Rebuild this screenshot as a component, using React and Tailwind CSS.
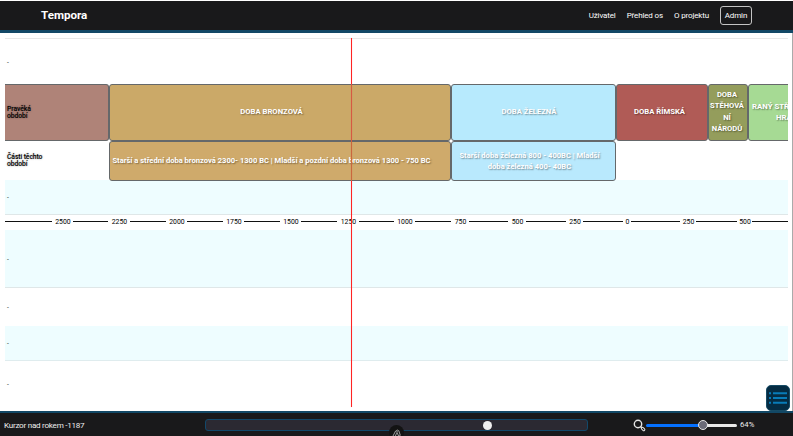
const SHADOW = '[text-shadow:1px_1px_1.5px_rgba(0,0,0,0.4)]';

const ticks = [
  ['w-[47px]', 'w-[21px]', '2500'],
  ['w-[35px]', 'w-[22px]', '2250'],
  ['w-[36px]', 'w-[21px]', '2000'],
  ['w-[36px]', 'w-[21px]', '1750'],
  ['w-[36px]', 'w-[21px]', '1500'],
  ['w-[36px]', 'w-[22px]', '1250'],
  ['w-[35px]', 'w-[21px]', '1000'],
  ['w-[36px]', 'w-[18px]', '750'],
  ['w-[39px]', 'w-[18px]', '500'],
  ['w-[40px]', 'w-[17px]', '250'],
  ['w-[40px]', 'w-[8px]', '0'],
  ['w-[49px]', 'w-[16px]', '250'],
  ['w-[41px]', 'w-[15px]', '500'],
];

function Axis() {
  return (
    <div className="flex h-[15px] items-center pb-[2px]">
      {ticks.map(([line, label, text], i) => (
        <div key={i} className="flex shrink-0 items-center">
          <span className={`h-px bg-[#111] ${line}`} />
          <span className={`flex justify-center pt-[2px] pl-px text-[6.9px] leading-[11px] text-black ${label}`}>{text}</span>
        </div>
      ))}
      <span className="h-px flex-1 bg-[#111]" />
    </div>
  );
}

function Era({ className, children }) {
  return (
    <div
      className={`flex shrink-0 items-center justify-center rounded-[3px] border border-[#65686a] text-center font-bold whitespace-nowrap text-white ${SHADOW} ${className}`}
    >
      {children}
    </div>
  );
}

function Lane({ className, children }) {
  return (
    <div className={`flex items-center pt-[3px] pl-[2px] text-[6.5px] leading-none text-[#333] ${className}`}>
      {children || '-'}
    </div>
  );
}

function Label({ children }) {
  return (
    <div className="absolute inset-y-0 left-[2px] flex w-[42px] items-center text-[6.8px] leading-[6.6px] font-medium tracking-[-0.1px] text-black [text-shadow:0_0_2px_rgba(0,0,0,0.4)]">
      {children}
    </div>
  );
}

function Search() {
  return (
    <svg className="h-[13px] w-[13px]" viewBox="0 0 13 13" fill="none" stroke="#e4e4e4">
      <circle cx="5" cy="5" r="3.7" strokeWidth="1.4" />
      <path d="M7.6 7.6 9 9" strokeWidth="1.5" />
      <rect x="8.1" y="8.9" width="4" height="2.2" rx="1.1" strokeWidth="1" transform="rotate(45 10.1 10)" />
    </svg>
  );
}

export default function App() {
  return (
    <div className="relative flex h-[436px] w-[793px] flex-col overflow-hidden bg-white font-['Roboto','Liberation_Sans',sans-serif]">
      <header className="mt-px flex h-[32px] shrink-0 items-center border-b-[3px] border-[#124866] bg-[#19191b] pr-[41px] pl-[41px] text-white">
        <h1 className="pt-px text-[11.6px] font-bold">Tempora</h1>
        <nav className="ml-auto flex items-center text-[8px] tracking-[-0.14px]">
          <a className="mr-[11px]">Uživatel</a>
          <a className="mr-[11px]">Přehled os</a>
          <a className="mr-[11px]">O projektu</a>
          <a className="flex h-[19px] w-[32px] items-center justify-center rounded-[3px] border-[1.5px] border-[#c4c4c4]">Admin</a>
        </nav>
      </header>

      <main className="relative h-[378px] shrink-0 border-r border-[#aaa] pt-[5px] pr-[4px] pl-[5px]">
        <div className="flex w-[783px] flex-col">
          <Lane className="h-[46px] border-t border-[#e8e8e8]" />
          <div className="relative flex h-[57px] overflow-hidden">
            <Era className="w-[104px] rounded-l-none border-l-0 bg-[#af8378]" />
            <Era className="w-[342px] bg-[#cba968] pr-[17px] pb-[2px] text-[7.7px]">DOBA BRONZOVÁ</Era>
            <Era className="w-[165px] bg-[#b7eafd] pr-[9px] pb-[2px] text-[7.7px]">DOBA ŽELEZNÁ</Era>
            <Era className="w-[92px] bg-[#b05b56] pr-[5px] pb-[2px] text-[7.7px]">DOBA ŘÍMSKÁ</Era>
            <Era className="w-[40px] bg-[#949d5c] pr-[2px] pb-[2px] text-[7.6px] leading-[11.3px]">
              DOBA<br />STĚHOVÁ<br />NÍ<br />NÁRODŮ
            </Era>
            <Era className="w-[76px] bg-[#a6da94] pb-px text-[7.8px] leading-[11.3px]">
              <span className="w-full pl-[3px] text-left">
                RANÝ STŘ<br />
                <span className="pl-[24px]">HRA</span>
              </span>
            </Era>
            <Label>Pravěká<br />období</Label>
          </div>
          <div className="relative flex h-[39px] pl-[104px]">
            <Era className="h-[40px] w-[342px] bg-[#cfaa6b] pr-[17px] text-[7.57px]">
              Starší a střední doba bronzová 2300- 1300 BC | Mladší a pozdní doba bronzová 1300 - 750 BC
            </Era>
            <Era className="h-[40px] w-[165px] bg-[#b9e9fd] pr-[8px] text-[7.6px] leading-[11px]">
              Starší doba železná 800 - 400BC | Mladší<br />doba železná 400- 40BC
            </Era>
            <Label>Části těchto<br />období</Label>
          </div>
          <Lane className="h-[35px] border-b border-[#dfe7e8] bg-[#eefdff]" />
          <Axis />
          <Lane className="h-[58px] border-b border-[#dfe7e8] bg-[#eefdff]" />
          <Lane className="h-[38px]" />
          <Lane className="h-[35px] border-b border-[#dfecee] bg-[#eefdff]" />
          <Lane className="h-[46px]" />
        </div>

        <div className="absolute top-[5px] left-[351px] flex h-[369px] w-px flex-col bg-[#ff2424] shadow-[0_0_1px_rgba(255,0,0,0.35)]">
          <span className="mt-[46px] h-[57px] bg-[#d65a42]" />
          <span className="h-[40px] bg-[#ca673d]" />
        </div>

        <button className="absolute top-[352px] left-[766px] flex h-[26px] w-[24px] items-center justify-center rounded-[5px] border border-[#174c66] bg-[#052c43]">
          <svg className="h-[14px] w-[20px]" viewBox="0 0 20 14" stroke="#087cb9" strokeWidth="2">
            <path d="M1 2.3h2M5 2.3h14M1 7h2M5 7h14M1 11.7h2M5 11.7h14" />
          </svg>
        </button>
      </main>

      <footer className="relative flex h-[25px] shrink-0 items-center border-t-2 border-[#124866] bg-[#19191b] pl-[4px] text-[8px] text-[#eee]">
        <span className="w-[201px] pt-px text-[8.1px] tracking-[-0.26px]">Kurzor nad rokem -1187</span>
        <div className="mt-px flex h-[12px] w-[383px] items-center rounded-[3px] border border-[#12486a] bg-[#2b2932] pl-[277px]">
          <span className="h-[9px] w-[9px] rounded-full bg-[#efefef]" />
        </div>
        <div className="ml-[45px] flex items-center pt-px">
          <Search />
          <div className="flex w-[91px] items-center">
            <span className="h-[3px] w-[53px] rounded-l-full bg-[#0470ff]" />
            <span className="-ml-px h-[10px] w-[10px] shrink-0 rounded-full border border-[#e5e5e5] bg-[#6b6b78]" />
            <span className="-ml-px h-[3px] flex-1 rounded-r-full bg-[#e9e9e9]" />
          </div>
          <span className="ml-[3px] text-[7.7px]">64%</span>
        </div>
        <div className="absolute top-[12px] left-[389px] flex h-[15px] w-[15px] justify-center rounded-full bg-[#131313] pt-[4px]">
          <svg className="h-[9px] w-[9px]" viewBox="0 0 9 9" fill="none" stroke="#aaa" strokeWidth="0.9" strokeLinecap="round">
            <path d="M1 7 3.6 2Q4.3 1 5 2T4.6 4.2L3.4 7M4.8 1.4Q6 .2 6.8 1.8L8.2 6Q8 7.6 6.6 7L5.4 4.4" />
          </svg>
        </div>
      </footer>
    </div>
  );
}
